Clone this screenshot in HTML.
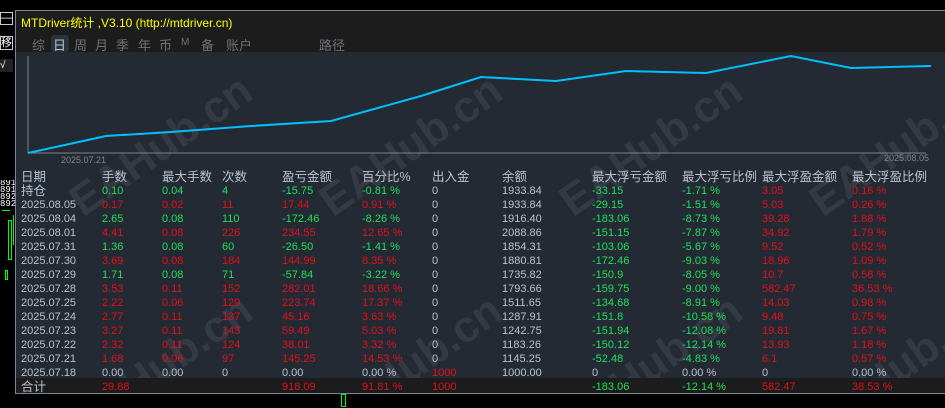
<!DOCTYPE html>
<html><head><meta charset="utf-8"><style>
*{margin:0;padding:0;box-sizing:border-box}
html,body{width:945px;height:408px;overflow:hidden}
body{background:#000;position:relative;font-family:"Liberation Sans","Noto Sans CJK SC",sans-serif}
.panel{position:absolute;left:15px;top:10px;width:930px;height:384px;border:1px solid #7a8694;border-right:none;background:#232a33;overflow:hidden}
.title{position:absolute;left:0;top:0;width:100%;height:41px;background:#1c1c1c}
.t{position:absolute;left:5px;top:3px;color:#ffff00;font-size:12px}
.tabs{position:absolute;top:24px;left:16px;color:#6d7178;font-size:13px}
.tabs span{position:absolute;white-space:nowrap}
.r{position:absolute;left:0;width:100%;height:14px;font-size:11px;line-height:14px}
.r span{position:absolute;white-space:nowrap}
.h span{font-size:12.5px}
.g{color:#1ee05a}.d{color:#e0101a}.w{color:#b8c2d0}
.wm{position:absolute;color:#333a43;font-size:44px;font-weight:bold;transform:rotate(-35deg);white-space:nowrap}
</style></head><body>
<div style="position:absolute;left:0;top:12px;width:13px;height:13px;border:1px solid #ccc;color:#fff;font-size:11px;line-height:10px;text-align:center">—</div>
<div style="position:absolute;left:0;top:36px;width:13px;height:14px;border:1px solid #ccc;color:#fff;font-size:11px;line-height:12px;overflow:hidden">移</div>
<div style="position:absolute;left:0;top:59px;width:13px;height:13px;background:#222;color:#fff;font-size:10px;line-height:13px">√</div>
<div style="position:absolute;left:0;top:180px;width:15px;height:28px;font-size:9px;line-height:7px;color:#fff;font-family:'Liberation Mono';overflow:hidden">891<br>891<br>892<br>892</div>
<div style="position:absolute;left:2px;top:210px;width:8px;height:1px;background:#0f0"></div>
<div style="position:absolute;left:8px;top:220px;width:4px;height:40px;border:1px solid #0f0"></div>
<div style="position:absolute;left:13px;top:215px;width:1px;height:30px;background:#0f0"></div>
<div style="position:absolute;left:5px;top:270px;width:3px;height:10px;border:1px solid #0f0"></div>
<div style="position:absolute;left:341px;top:394px;width:5px;height:13px;border:1px solid #0f0"></div>
<div class="panel">
<div class="title"><div class="t">MTDriver统计 ,V3.10 (http://mtdriver.cn)</div>
<div style="position:absolute;left:35px;top:24px;width:18px;height:17px;background:#2b323c;border-radius:3px"></div>
<div class="tabs"><span style="left:0">综</span><span style="left:21px;color:#b8c2d0">日</span><span style="left:42px">周</span><span style="left:63px">月</span><span style="left:84px">季</span><span style="left:106px">年</span><span style="left:127px">币</span><span style="left:149px;font-size:10px;top:2px">M</span><span style="left:169px">备</span><span style="left:194px">账户</span><span style="left:287px">路径</span></div>
</div>
<div class="wm" style="left:40px;top:110px">EAHub.cn</div>
<div class="wm" style="left:290px;top:110px">EAHub.cn</div>
<div class="wm" style="left:530px;top:110px">EAHub.cn</div>
<div class="wm" style="left:780px;top:110px">EAHub.cn</div>
<div class="wm" style="left:40px;top:330px">EAHub.cn</div>
<div class="wm" style="left:290px;top:330px">EAHub.cn</div>
<div class="wm" style="left:530px;top:330px">EAHub.cn</div>
<div class="wm" style="left:780px;top:330px">EAHub.cn</div>
<svg style="position:absolute;left:0;top:0" width="930" height="160">
<line x1="12" y1="45" x2="12" y2="142" stroke="#808080"/>
<line x1="12" y1="142" x2="910" y2="142" stroke="#808080"/>
<polyline fill="none" stroke="#00bfff" stroke-width="2" points="12,142 90,125 155,121 235,115 315,110 405,85 465,66 540,70 610,60 690,62 775,45 835,57 915,55"/>
<text x="45" y="152" fill="#7d8590" font-size="9" font-family="Liberation Sans">2025.07.21</text>
<text x="868" y="150" fill="#7d8590" font-size="9" font-family="Liberation Sans">2025.08.05</text>
</svg>
<div style="position:absolute;left:0;top:367px;width:100%;height:16px;background:#1c1c1c"></div>
<div class="r w h" style="top:159px"><span style="left:5px">日期</span><span style="left:86px">手数</span><span style="left:146px">最大手数</span><span style="left:206px">次数</span><span style="left:266px">盈亏金额</span><span style="left:346px">百分比%</span><span style="left:416px">出入金</span><span style="left:486px">余额</span><span style="left:576px">最大浮亏金额</span><span style="left:666px">最大浮亏比例</span><span style="left:746px">最大浮盈金额</span><span style="left:836px">最大浮盈比例</span></div>
<div class="r" style="top:173px"><span class="w" style="left:5px;font-size:12.5px">持仓</span><span class="g" style="left:86px">0.10</span><span class="g" style="left:146px">0.04</span><span class="g" style="left:206px">4</span><span class="g" style="left:266px">-15.75</span><span class="g" style="left:346px">-0.81 %</span><span class="w" style="left:416px">0</span><span class="w" style="left:486px">1933.84</span><span class="g" style="left:576px">-33.15</span><span class="g" style="left:666px">-1.71 %</span><span class="d" style="left:746px">3.05</span><span class="d" style="left:836px">0.16 %</span></div>
<div class="r" style="top:187px"><span class="w" style="left:5px">2025.08.05</span><span class="d" style="left:86px">0.17</span><span class="d" style="left:146px">0.02</span><span class="d" style="left:206px">11</span><span class="d" style="left:266px">17.44</span><span class="d" style="left:346px">0.91 %</span><span class="w" style="left:416px">0</span><span class="w" style="left:486px">1933.84</span><span class="g" style="left:576px">-29.15</span><span class="g" style="left:666px">-1.51 %</span><span class="d" style="left:746px">5.03</span><span class="d" style="left:836px">0.26 %</span></div>
<div class="r" style="top:201px"><span class="w" style="left:5px">2025.08.04</span><span class="g" style="left:86px">2.65</span><span class="g" style="left:146px">0.08</span><span class="g" style="left:206px">110</span><span class="g" style="left:266px">-172.46</span><span class="g" style="left:346px">-8.26 %</span><span class="w" style="left:416px">0</span><span class="w" style="left:486px">1916.40</span><span class="g" style="left:576px">-183.06</span><span class="g" style="left:666px">-8.73 %</span><span class="d" style="left:746px">39.28</span><span class="d" style="left:836px">1.88 %</span></div>
<div class="r" style="top:215px"><span class="w" style="left:5px">2025.08.01</span><span class="d" style="left:86px">4.41</span><span class="d" style="left:146px">0.08</span><span class="d" style="left:206px">226</span><span class="d" style="left:266px">234.55</span><span class="d" style="left:346px">12.65 %</span><span class="w" style="left:416px">0</span><span class="w" style="left:486px">2088.86</span><span class="g" style="left:576px">-151.15</span><span class="g" style="left:666px">-7.87 %</span><span class="d" style="left:746px">34.92</span><span class="d" style="left:836px">1.79 %</span></div>
<div class="r" style="top:229px"><span class="w" style="left:5px">2025.07.31</span><span class="g" style="left:86px">1.36</span><span class="g" style="left:146px">0.08</span><span class="g" style="left:206px">60</span><span class="g" style="left:266px">-26.50</span><span class="g" style="left:346px">-1.41 %</span><span class="w" style="left:416px">0</span><span class="w" style="left:486px">1854.31</span><span class="g" style="left:576px">-103.06</span><span class="g" style="left:666px">-5.67 %</span><span class="d" style="left:746px">9.52</span><span class="d" style="left:836px">0.52 %</span></div>
<div class="r" style="top:243px"><span class="w" style="left:5px">2025.07.30</span><span class="d" style="left:86px">3.69</span><span class="d" style="left:146px">0.08</span><span class="d" style="left:206px">184</span><span class="d" style="left:266px">144.99</span><span class="d" style="left:346px">8.35 %</span><span class="w" style="left:416px">0</span><span class="w" style="left:486px">1880.81</span><span class="g" style="left:576px">-172.46</span><span class="g" style="left:666px">-9.03 %</span><span class="d" style="left:746px">18.96</span><span class="d" style="left:836px">1.09 %</span></div>
<div class="r" style="top:257px"><span class="w" style="left:5px">2025.07.29</span><span class="g" style="left:86px">1.71</span><span class="g" style="left:146px">0.08</span><span class="g" style="left:206px">71</span><span class="g" style="left:266px">-57.84</span><span class="g" style="left:346px">-3.22 %</span><span class="w" style="left:416px">0</span><span class="w" style="left:486px">1735.82</span><span class="g" style="left:576px">-150.9</span><span class="g" style="left:666px">-8.05 %</span><span class="d" style="left:746px">10.7</span><span class="d" style="left:836px">0.58 %</span></div>
<div class="r" style="top:271px"><span class="w" style="left:5px">2025.07.28</span><span class="d" style="left:86px">3.53</span><span class="d" style="left:146px">0.11</span><span class="d" style="left:206px">152</span><span class="d" style="left:266px">282.01</span><span class="d" style="left:346px">18.66 %</span><span class="w" style="left:416px">0</span><span class="w" style="left:486px">1793.66</span><span class="g" style="left:576px">-159.75</span><span class="g" style="left:666px">-9.00 %</span><span class="d" style="left:746px">582.47</span><span class="d" style="left:836px">36.53 %</span></div>
<div class="r" style="top:285px"><span class="w" style="left:5px">2025.07.25</span><span class="d" style="left:86px">2.22</span><span class="d" style="left:146px">0.06</span><span class="d" style="left:206px">129</span><span class="d" style="left:266px">223.74</span><span class="d" style="left:346px">17.37 %</span><span class="w" style="left:416px">0</span><span class="w" style="left:486px">1511.65</span><span class="g" style="left:576px">-134.68</span><span class="g" style="left:666px">-8.91 %</span><span class="d" style="left:746px">14.03</span><span class="d" style="left:836px">0.98 %</span></div>
<div class="r" style="top:299px"><span class="w" style="left:5px">2025.07.24</span><span class="d" style="left:86px">2.77</span><span class="d" style="left:146px">0.11</span><span class="d" style="left:206px">137</span><span class="d" style="left:266px">45.16</span><span class="d" style="left:346px">3.63 %</span><span class="w" style="left:416px">0</span><span class="w" style="left:486px">1287.91</span><span class="g" style="left:576px">-151.8</span><span class="g" style="left:666px">-10.58 %</span><span class="d" style="left:746px">9.48</span><span class="d" style="left:836px">0.75 %</span></div>
<div class="r" style="top:313px"><span class="w" style="left:5px">2025.07.23</span><span class="d" style="left:86px">3.27</span><span class="d" style="left:146px">0.11</span><span class="d" style="left:206px">143</span><span class="d" style="left:266px">59.49</span><span class="d" style="left:346px">5.03 %</span><span class="w" style="left:416px">0</span><span class="w" style="left:486px">1242.75</span><span class="g" style="left:576px">-151.94</span><span class="g" style="left:666px">-12.08 %</span><span class="d" style="left:746px">19.81</span><span class="d" style="left:836px">1.67 %</span></div>
<div class="r" style="top:327px"><span class="w" style="left:5px">2025.07.22</span><span class="d" style="left:86px">2.32</span><span class="d" style="left:146px">0.11</span><span class="d" style="left:206px">124</span><span class="d" style="left:266px">38.01</span><span class="d" style="left:346px">3.32 %</span><span class="w" style="left:416px">0</span><span class="w" style="left:486px">1183.26</span><span class="g" style="left:576px">-150.12</span><span class="g" style="left:666px">-12.14 %</span><span class="d" style="left:746px">13.93</span><span class="d" style="left:836px">1.18 %</span></div>
<div class="r" style="top:341px"><span class="w" style="left:5px">2025.07.21</span><span class="d" style="left:86px">1.68</span><span class="d" style="left:146px">0.06</span><span class="d" style="left:206px">97</span><span class="d" style="left:266px">145.25</span><span class="d" style="left:346px">14.53 %</span><span class="w" style="left:416px">0</span><span class="w" style="left:486px">1145.25</span><span class="g" style="left:576px">-52.48</span><span class="g" style="left:666px">-4.83 %</span><span class="d" style="left:746px">6.1</span><span class="d" style="left:836px">0.57 %</span></div>
<div class="r" style="top:355px"><span class="w" style="left:5px">2025.07.18</span><span class="w" style="left:86px">0.00</span><span class="w" style="left:146px">0.00</span><span class="w" style="left:206px">0</span><span class="w" style="left:266px">0.00</span><span class="w" style="left:346px">0.00 %</span><span class="d" style="left:416px">1000</span><span class="w" style="left:486px">1000.00</span><span class="w" style="left:576px">0</span><span class="w" style="left:666px">0.00 %</span><span class="w" style="left:746px">0</span><span class="w" style="left:836px">0.00 %</span></div>
<div class="r" style="top:369px"><span class="w" style="left:5px;font-size:12.5px">合计</span><span class="d" style="left:86px">29.88</span><span class="d" style="left:266px">918.09</span><span class="d" style="left:346px">91.81 %</span><span class="d" style="left:416px">1000</span><span class="g" style="left:576px">-183.06</span><span class="g" style="left:666px">-12.14 %</span><span class="d" style="left:746px">582.47</span><span class="d" style="left:836px">38.53 %</span></div>
</div>
</body></html>
